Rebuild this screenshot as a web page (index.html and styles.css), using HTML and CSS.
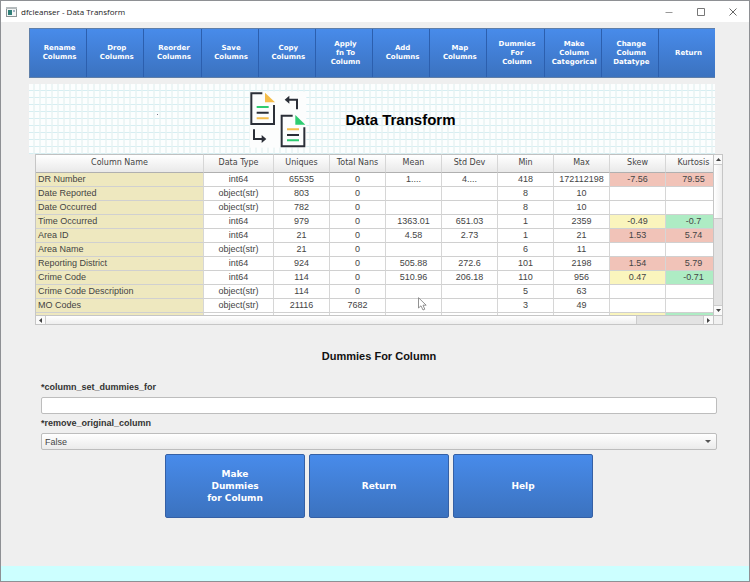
FILE: index.html
```html
<!DOCTYPE html>
<html lang="en">
<head>
<meta charset="utf-8">
<title>dfcleanser - Data Transform</title>
<link rel="stylesheet" href="styles.css">
</head>
<body>
<div class="window">
  <header class="titlebar">
    <svg class="app-icon" viewBox="0 0 11 10"><rect x="0.5" y="0.5" width="10" height="9" fill="#f4f6f6" stroke="#8b9496"/><rect x="0" y="0" width="11" height="2" fill="#b4babc"/><rect x="2" y="3" width="4" height="5" fill="#2f7f78"/><rect x="7" y="3" width="2" height="2" fill="#9fb3c4"/></svg>
    <span class="window-title">dfcleanser - Data Transform</span>
    <div class="window-controls">
      <button type="button" aria-label="Minimize"><svg viewBox="0 0 8 8"><path d="M0.5 4.5H7.5" stroke="#999"/></svg></button>
      <button type="button" aria-label="Maximize"><svg viewBox="0 0 8 8"><path d="M0.5 0.5H7.5V7.5H0.5Z" stroke="#777" fill="none"/></svg></button>
      <button type="button" aria-label="Close"><svg viewBox="0 0 8 8"><path d="M0.5 0.5L7.5 7.5M7.5 0.5L0.5 7.5" stroke="#666"/></svg></button>
    </div>
  </header>

  <main class="content">
    <nav class="toolbar">
      <button type="button">Rename<br>Columns</button>
      <button type="button">Drop<br>Columns</button>
      <button type="button">Reorder<br>Columns</button>
      <button type="button">Save<br>Columns</button>
      <button type="button">Copy<br>Columns</button>
      <button type="button">Apply<br>fn To<br>Column</button>
      <button type="button">Add<br>Columns</button>
      <button type="button">Map<br>Columns</button>
      <button type="button">Dummies<br>For<br>Column</button>
      <button type="button">Make<br>Column<br>Categorical</button>
      <button type="button">Change<br>Column<br>Datatype</button>
      <button type="button">Return</button>
    </nav>

    <section class="banner">
      <svg class="banner-icon" viewBox="0 0 198 198" fill="none">
        <rect x="14" y="14" width="170" height="168" fill="#fcfdfd"/>
        <g stroke="#2b2f38" stroke-width="6">
          <path d="M52 19H19V111H87V54"/>
          <path d="M143 86H110V178H178V121"/>
          <path d="M156 67V38H128"/>
          <path d="M27 127V156H54"/>
        </g>
        <path d="M119 38L133 26V50ZM64 156L50 144V168Z" fill="#2b2f38"/>
        <path d="M60 17V46H90Z" fill="#f5bd49"/>
        <path d="M151 84V113H181Z" fill="#2ecc71"/>
        <g stroke-width="6">
          <path d="M35 60H71M126 160H162" stroke="#2ecc71"/>
          <path d="M35 77H71M126 144H162" stroke="#2b2f38"/>
          <path d="M35 94H71M126 127H162" stroke="#f5bd49"/>
        </g>
      </svg>
      <h1>Data Transform</h1>
    </section>

    <section class="grid-view">
      <div class="grid-viewport">
        <table>
          <thead>
            <tr><th class="name">Column Name</th><th class="type">Data Type</th><th>Uniques</th><th>Total Nans</th><th>Mean</th><th>Std Dev</th><th>Min</th><th>Max</th><th>Skew</th><th>Kurtosis</th></tr>
          </thead>
          <tbody>
            <tr><td>DR Number</td><td>int64</td><td>65535</td><td>0</td><td>1....</td><td>4....</td><td>418</td><td>172112198</td><td class="high">-7.56</td><td class="high">79.55</td></tr>
            <tr><td>Date Reported</td><td>object(str)</td><td>803</td><td>0</td><td></td><td></td><td>8</td><td>10</td><td></td><td></td></tr>
            <tr><td>Date Occurred</td><td>object(str)</td><td>782</td><td>0</td><td></td><td></td><td>8</td><td>10</td><td></td><td></td></tr>
            <tr><td>Time Occurred</td><td>int64</td><td>979</td><td>0</td><td>1363.01</td><td>651.03</td><td>1</td><td>2359</td><td class="mid">-0.49</td><td class="low">-0.7</td></tr>
            <tr><td>Area ID</td><td>int64</td><td>21</td><td>0</td><td>4.58</td><td>2.73</td><td>1</td><td>21</td><td class="high">1.53</td><td class="high">5.74</td></tr>
            <tr><td>Area Name</td><td>object(str)</td><td>21</td><td>0</td><td></td><td></td><td>6</td><td>11</td><td></td><td></td></tr>
            <tr><td>Reporting District</td><td>int64</td><td>924</td><td>0</td><td>505.88</td><td>272.6</td><td>101</td><td>2198</td><td class="high">1.54</td><td class="high">5.79</td></tr>
            <tr><td>Crime Code</td><td>int64</td><td>114</td><td>0</td><td>510.96</td><td>206.18</td><td>110</td><td>956</td><td class="mid">0.47</td><td class="low">-0.71</td></tr>
            <tr><td>Crime Code Description</td><td>object(str)</td><td>114</td><td>0</td><td></td><td></td><td>5</td><td>63</td><td></td><td></td></tr>
            <tr><td>MO Codes</td><td>object(str)</td><td>21116</td><td>7682</td><td></td><td></td><td>3</td><td>49</td><td></td><td></td></tr>
            <tr><td></td><td></td><td></td><td></td><td></td><td></td><td></td><td></td><td class="mid"></td><td class="low"></td></tr>
          </tbody>
        </table>
      </div>
      <div class="scrollbar vertical">
        <span class="arrow"><svg viewBox="0 0 10 6"><path d="M0 6L5 0L10 6Z"/></svg></span>
        <span class="thumb"></span>
        <span class="track"></span>
        <span class="arrow"><svg viewBox="0 0 10 6"><path d="M0 0L5 6L10 0Z"/></svg></span>
      </div>
      <div class="scrollbar horizontal">
        <span class="arrow"><svg viewBox="0 0 6 10"><path d="M6 0L0 5L6 10Z"/></svg></span>
        <span class="thumb"></span>
        <span class="track"></span>
        <span class="arrow"><svg viewBox="0 0 6 10"><path d="M0 0L6 5L0 10Z"/></svg></span>
      </div>
      <div class="scroll-corner"></div>
      <svg class="pointer" viewBox="0 0 9 14"><path d="M0.5 0.7V11L3 8.8L5 13L6.8 12.2L5 8.2H8.2Z" fill="#fff" stroke="#777" stroke-width="0.8"/></svg>
    </section>

    <form class="dummies-form">
      <h2>Dummies For Column</h2>
      <label for="column">*column_set_dummies_for</label>
      <input id="column" type="text">
      <label for="remove">*remove_original_column</label>
      <div class="select-box">
        <select id="remove"><option>False</option><option>True</option></select>
        <svg viewBox="0 0 6 3"><path d="M0 0H6L3 3Z" fill="#555"/></svg>
      </div>
      <div class="actions">
        <button type="button">Make<br>Dummies<br>for Column</button>
        <button type="button">Return</button>
        <button type="button">Help</button>
      </div>
    </form>
  </main>
  <footer class="statusbar"></footer>
</div>
</body>
</html>
```

FILE: styles.css
```css
* { box-sizing: border-box; }

body {
  margin: 0;
  font-family: "Liberation Sans", Arial, sans-serif;
  font-size: 9px;
  color: #444;
}

button, input, select { font: inherit; color: inherit; margin: 0; }

.window {
  display: flex;
  flex-direction: column;
  min-height: 100vh;
  background: #efefef;
  border: 1px solid #8e9094;
}

.titlebar {
  display: flex;
  align-items: center;
  height: 21px;
  padding-left: 5px;
  background: #fff;
}

.app-icon { width: 11px; height: 10px; }

.window-title {
  margin-left: 4px;
  font-family: "Open Sans", sans-serif;
  font-size: 8px;
  color: #222;
}

.window-controls { display: flex; margin-left: auto; }

.window-controls button {
  display: flex;
  align-items: center;
  justify-content: center;
  width: 32px;
  height: 20px;
  padding: 0;
  border: 0;
  background: none;
}

.window-controls svg { width: 8px; height: 8px; fill: none; }

.content { flex: 1; padding: 6px 26px 0 28px; }

.toolbar {
  display: flex;
  height: 50px;
  margin-right: 8px;
  border: 1px solid #5f7fa9;
  border-right: 0;
}

.toolbar button {
  flex: 1;
  padding: 0 0 0 3px;
  border: 0;
  border-left: 1px solid #2c5fae;
}

.toolbar button:first-child { border-left: 0; }

.toolbar button, .actions button {
  background: linear-gradient(#488bea, #3b72bf);
  color: #fff;
  font: bold 7px/9px "DejaVu Sans", sans-serif;
}

.banner {
  display: flex;
  align-items: center;
  justify-content: center;
  gap: 34px;
  height: 70px;
  margin: 6px 8px 0 0;
  padding: 2px 43px 0 0;
  background:
    linear-gradient(#778, #778) 128px 30px / 1px 1px no-repeat,
    repeating-linear-gradient(90deg, transparent 0 4px, #e6f2f2b0 4px 6px),
    repeating-linear-gradient(transparent 0 6px, #d6eef2 6px 7px),
    #fcfefe;
}

.banner-icon { width: 66px; height: 66px; }

h1 { margin: 0; font-size: 15px; line-height: 18px; color: #000; }

.grid-view {
  position: relative;
  display: grid;
  grid-template: 161px 10px / 1fr 10px;
  margin-left: 6px;
  border-left: 1px solid #c6c6c6;
  background: #fff;
}

.grid-viewport { overflow: hidden; }

table {
  width: calc(100% + 9px);
  table-layout: fixed;
  border-collapse: separate;
  border-spacing: 0;
}

th, td {
  width: 56px;
  height: 14px;
  padding: 0;
  overflow: hidden;
  border-right: 1px solid #d6d6d6;
  border-bottom: 1px solid #d0d0d0;
  line-height: 13px;
  text-align: center;
  white-space: nowrap;
}

th {
  height: 19px;
  padding-bottom: 2px;
  border-top: 1px solid #c0c0c0;
  border-bottom-color: #b0b0b0;
  background: linear-gradient(#fff, #e9e9e9);
  font-family: "DejaVu Sans", sans-serif;
  font-size: 8px;
  font-weight: normal;
}

th.name { width: auto; }
th.type { width: 70px; }

td:first-child { padding-left: 2px; background: #eee8bf; text-align: left; }

td.high { background: #f1c3b8; }
td.mid { background: #faf5bd; }
td.low { background: #aeecc4; }

.scrollbar { display: flex; border: 1px solid #c6c6c6; background: #fafafa; }
.scrollbar.vertical { flex-direction: column; border-bottom: 0; }
.scrollbar.horizontal { border-left: 0; border-right: 0; }

.arrow {
  display: flex;
  flex: 0 0 9px;
  align-items: center;
  justify-content: center;
}

.arrow svg { fill: #444; }
.vertical svg { width: 5px; height: 3px; }
.horizontal svg { width: 3px; height: 5px; }

.track { background: #e3e3e3; }
.vertical .thumb { flex: 54; border: solid #ccc; border-width: 1px 0; background: linear-gradient(90deg, #fff, #eee); }
.vertical .track { flex: 88; border-bottom: 1px solid #ccc; }
.horizontal .thumb { flex: 592; border: solid #ccc; border-width: 0 1px; background: linear-gradient(#fff, #eee); }
.horizontal .track { flex: 66; border-right: 1px solid #ccc; }

.scroll-corner { border: 1px solid #c6c6c6; background: #f1f1f1; }

.pointer { position: absolute; left: 382px; top: 143px; width: 9px; height: 14px; }

.dummies-form { display: flex; flex-direction: column; padding: 22px 6px 0 12px; }

h2 {
  margin: 0 0 13px;
  font-size: 11px;
  line-height: 18px;
  color: #111;
  text-align: center;
}

label {
  margin-bottom: 1px;
  font-size: 9px;
  font-weight: bold;
  line-height: 18px;
  color: #333;
}

input, .select-box {
  height: 17px;
  border: 1px solid #bdbdbd;
  border-radius: 2px;
  background: #fff;
}

.select-box {
  display: flex;
  align-items: center;
  padding-right: 5px;
  background: linear-gradient(#fff, #ebebeb);
}

select {
  flex: 1;
  height: 15px;
  padding: 0 0 0 3px;
  border: 0;
  appearance: none;
  background: none;
}

.select-box svg { width: 6px; height: 3px; }

.actions { display: flex; justify-content: center; gap: 4px; margin-top: 4px; }

.actions button {
  width: 140px;
  height: 64px;
  padding: 0;
  border: 1px solid #3560a5;
  border-radius: 2px;
  font-size: 9px;
  line-height: 12px;
}

.statusbar { height: 15px; background: #ccffff; }
```
